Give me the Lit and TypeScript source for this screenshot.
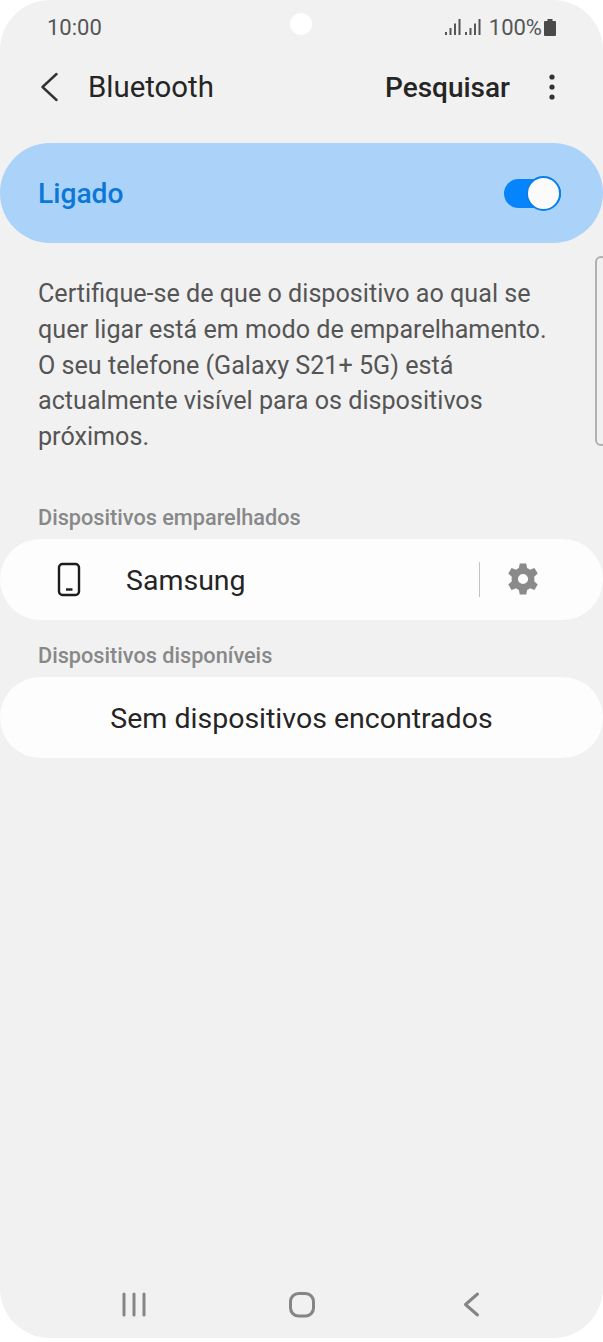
import { LitElement, html, css } from 'lit';
import { customElement } from 'lit/decorators.js';

@customElement('app-root')
export class AppRoot extends LitElement {
  static styles = css`
    :host {
      display: block;
      width: 603px;
      height: 1342px;
      background: #fff;
      font-family: Roboto, "Liberation Sans", sans-serif;
      overflow: hidden;
    }
    .screen {
      position: relative;
      height: 1338px;
      background: #f1f1f1;
      border-radius: 50px;
      display: flex;
      flex-direction: column;
      overflow: hidden;
    }
    .camera {
      position: absolute;
      left: 290px;
      top: 13px;
      width: 22px;
      height: 22px;
      border-radius: 50%;
      background: #fff;
    }
    .status {
      height: 54px;
      display: flex;
      align-items: center;
      justify-content: space-between;
      padding: 0 47px 0 47px;
      color: #555;
      font-size: 22px;
    }
    .status-right {
      display: flex;
      align-items: center;
      gap: 2px;
    }
    .signal {
      display: flex;
      gap: 4px;
      margin-right: 6px;
    }
    .header {
      height: 66px;
      display: flex;
      align-items: center;
      color: #252525;
    }
    .back {
      margin-left: 41px;
      width: 18px;
      height: 30px;
    }
    .title {
      margin-left: 29px;
      font-size: 29.400px;
      flex: 1;
    }
    .action {
      font-size: 28px;
      font-weight: 500;
    }
    .more {
      margin: 0 48px 0 39px;
      width: 6px;
      height: 26px;
    }
    .master {
      margin-top: 23px;
      height: 100px;
      border-radius: 50px;
      background: #abd3fa;
      display: flex;
      align-items: center;
      justify-content: space-between;
      padding: 0 42px 0 38px;
      color: #0b78d8;
      font-size: 28.200px;
      font-weight: 500;
    }
    .switch {
      position: relative;
      width: 57px;
      height: 29px;
      border-radius: 15px;
      background: #0584fb;
    }
    .thumb {
      position: absolute;
      right: 0;
      top: -3px;
      width: 31px;
      height: 31px;
      border-radius: 50%;
      background: #fbfbfb;
      border: 2px solid #0b7fe8;
    }
    .desc {
      margin: 33px 55px 0 38px;
      font-size: 25.150px;
      line-height: 35.800px;
      color: #555;
    }
    .rail {
      position: absolute;
      left: 595px;
      top: 256px;
      width: 12px;
      height: 190px;
      box-sizing: border-box;
      border: 2px solid #b0b0b0;
      border-radius: 8px;
    }
    .section {
      font-size: 21.700px;
      font-weight: 500;
      color: #888;
      margin-left: 38px;
      height: 24px;
      line-height: 26px;
    }
    .first {
      margin-top: 50px;
    }
    .second {
      margin-top: 23px;
    }
    .card {
      margin-top: 10px;
      height: 81px;
      border-radius: 41px;
      background: #fdfdfd;
      display: flex;
      align-items: center;
      font-size: 28.500px;
      line-height: 38px;
      color: #252525;
    }
    .label {
      padding-top: 3px;
    }
    .phone {
      margin-left: 57px;
      width: 25px;
      height: 35px;
    }
    .name {
      margin-left: 44px;
      flex: 1;
    }
    .divider {
      width: 1px;
      height: 35px;
      background: #c4c4c4;
    }
    .gear {
      margin: 0 63px 0 26px;
      width: 34px;
      height: 34px;
    }
    .empty {
      justify-content: center;
    }
    .nav {
      margin-top: auto;
      height: 49px;
      display: grid;
      grid-template-columns: 1fr 1fr 1fr;
      align-items: start;
      justify-items: center;
    }
    .nav svg {
      width: 30px;
      height: 28px;
      margin-top: 2px;
    }
    .nav-left {
      margin-left: 67px;
    }
    .nav-right {
      margin-right: 62px;
    }
  `;

  render() {
    return html`
      <div class="screen">
        <div class="camera"></div>
        <div class="status">
          <span>10:00</span>
          <div class="status-right">
            <div class="signal">
              ${[0, 1].map(() => html`
                <svg width="16" height="16" viewBox="0 0 16 16" fill="#555">
                  <rect x="0" y="13" width="2" height="3"/>
                  <rect x="4.500" y="9" width="2" height="7"/>
                  <rect x="9" y="4.500" width="2" height="11.500"/>
                  <rect x="13.500" y="0" width="2" height="16"/>
                </svg>`)}
            </div>
            <span>100%</span>
            <svg width="12" height="17" viewBox="0 0 12 17" fill="#4a4a4a">
              <path d="M3.500 0h5v2H11a1 1 0 0 1 1 1v13a1 1 0 0 1-1 1H1a1 1 0 0 1-1-1V3a1 1 0 0 1 1-1h2.500z"/>
            </svg>
          </div>
        </div>
        <div class="header">
          <svg class="back" viewBox="0 0 18 30" fill="none" stroke="#333" stroke-width="2.400" stroke-linecap="round" stroke-linejoin="round">
            <path d="M15.500 2 1.500 15l14 13"/>
          </svg>
          <span class="title">Bluetooth</span>
          <span class="action">Pesquisar</span>
          <svg class="more" viewBox="0 0 6 26" fill="#333">
            <circle cx="3" cy="3" r="2.600"/>
            <circle cx="3" cy="13" r="2.600"/>
            <circle cx="3" cy="23" r="2.600"/>
          </svg>
        </div>
        <div class="master">
          <span>Ligado</span>
          <div class="switch"><div class="thumb"></div></div>
        </div>
        <div class="desc">Certifique-se de que o dispositivo ao qual se quer ligar está em modo de emparelhamento. O seu telefone (Galaxy S21+ 5G) está actualmente visível para os dispositivos próximos.</div>
        <div class="rail"></div>
        <div class="section first">Dispositivos emparelhados</div>
        <div class="card">
          <svg class="phone" viewBox="0 0 25 35" fill="none" stroke="#1c1c1c" stroke-width="2.400">
            <rect x="2" y="2" width="20" height="31" rx="3.500"/>
            <path d="M9 27.500h6.500"/>
          </svg>
          <span class="name label">Samsung</span>
          <div class="divider"></div>
          <svg class="gear" viewBox="0 0 24 24" fill="#8a8a8a">
            <path fill-rule="evenodd" d="M14.300 1h-4.600l-.6 3.300a8.300 8.300 0 0 0-2 1.200L3.900 4.300 1.600 8.200l2.500 2.200a8.300 8.300 0 0 0 0 3.200l-2.500 2.200 2.300 3.900 3.200-1.200a8.300 8.300 0 0 0 2 1.200l.6 3.300h4.600l.6-3.300a8.300 8.300 0 0 0 2-1.200l3.200 1.200 2.300-3.900-2.500-2.200a8.300 8.300 0 0 0 0-3.200l2.500-2.200-2.300-3.900-3.200 1.200a8.300 8.300 0 0 0-2-1.200zM12 8.400a3.600 3.600 0 1 1 0 7.200 3.600 3.600 0 0 1 0-7.200z"/>
          </svg>
        </div>
        <div class="section second">Dispositivos disponíveis</div>
        <div class="card empty"><span class="label">Sem dispositivos encontrados</span></div>
        <div class="nav">
          <svg class="nav-left" viewBox="0 0 30 28" fill="none" stroke="#858585" stroke-width="3" stroke-linecap="round">
            <path d="M5 3v21M15 3v21M25 3v21"/>
          </svg>
          <svg viewBox="0 0 30 28" fill="none" stroke="#858585" stroke-width="3">
            <rect x="3.500" y="2.500" width="23" height="22.500" rx="8"/>
          </svg>
          <svg class="nav-right" viewBox="0 0 30 28" fill="none" stroke="#858585" stroke-width="3" stroke-linecap="round" stroke-linejoin="round">
            <path d="M20.500 3 8.500 13.500l12 10.500"/>
          </svg>
        </div>
      </div>
    `;
  }
}
